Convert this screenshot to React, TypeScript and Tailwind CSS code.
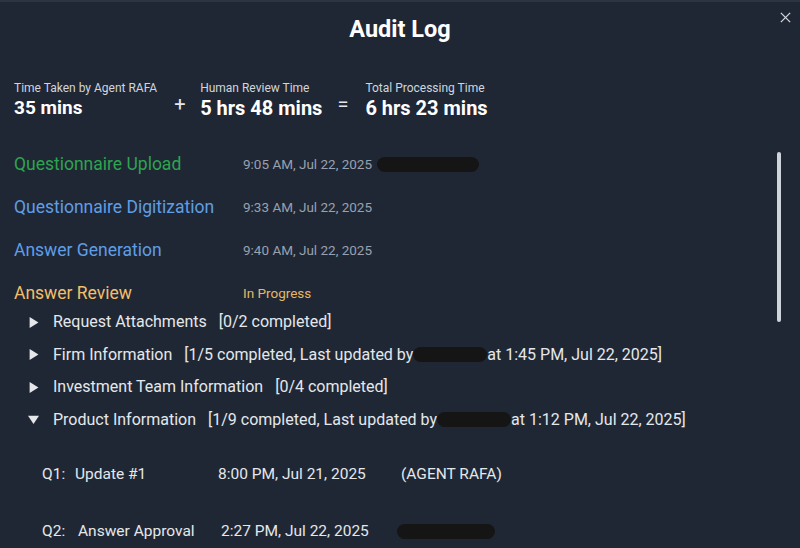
import React from 'react';

const Redacted: React.FC<{ w: string }> = ({ w }) => (
  <span className={`inline-block h-[15px] rounded-full bg-[#151515] align-middle ${w}`} />
);

const Caret: React.FC<{ open?: boolean }> = ({ open }) => (
  <svg className="w-[11px] h-[11px] text-gray-200" viewBox="0 0 10 10" fill="currentColor">
    {open ? <path d="M0 1.5h10L5 9z" /> : <path d="M1.5 0v10L9.5 5z" />}
  </svg>
);

const stages = [
  { name: 'Questionnaire Upload', color: 'text-[#2ea44f]', time: '9:05 AM, Jul 22, 2025', redacted: true },
  { name: 'Questionnaire Digitization', color: 'text-[#5f9ee6]', time: '9:33 AM, Jul 22, 2025' },
  { name: 'Answer Generation', color: 'text-[#5f9ee6]', time: '9:40 AM, Jul 22, 2025' },
];

const sections = [
  { name: 'Request Attachments', info: '[0/2 completed]' },
  { name: 'Firm Information', info: '[1/5 completed, Last updated by', by: 'at 1:45 PM, Jul 22, 2025]' },
  { name: 'Investment Team Information', info: '[0/4 completed]' },
  { name: 'Product Information', info: '[1/9 completed, Last updated by', by: 'at 1:12 PM, Jul 22, 2025]', open: true },
];

export default function App() {
  return (
    <div
      className="w-[800px] h-[548px] overflow-hidden bg-[#1f2735] border-t-2 border-[#2c3442] relative text-white"
      style={{ fontFamily: 'Roboto, "Noto Sans", sans-serif' }}
    >
      <button className="absolute right-[8px] top-[9px] text-gray-300">
        <svg className="w-[13px] h-[13px]" viewBox="0 0 14 14" stroke="currentColor" strokeWidth="1.4">
          <path d="M2 2l10 10M12 2L2 12" />
        </svg>
      </button>

      <h1 className="text-center text-[23.5px] font-bold pt-[12px] leading-[30px]">Audit Log</h1>

      <div className="flex items-end pl-[14px] mt-[36px]">
        <div className="flex flex-col">
          <span className="text-[12px] text-gray-300 leading-[16px]">Time Taken by Agent RAFA</span>
          <span className="text-[19px] font-bold leading-[24px]">35 mins</span>
        </div>
        <span className="ml-[17px] w-[12px] text-[20px] text-gray-200 leading-[24px] mb-[4px]">+</span>
        <div className="flex flex-col ml-[14px]">
          <span className="text-[12px] text-gray-300 leading-[16px]">Human Review Time</span>
          <span className="text-[20px] font-bold leading-[24px]">5 hrs 48 mins</span>
        </div>
        <span className="ml-[15px] w-[12px] text-[20px] text-gray-200 leading-[24px] mb-[4px]">=</span>
        <div className="flex flex-col ml-[16px]">
          <span className="text-[12px] text-gray-300 leading-[16px]">Total Processing Time</span>
          <span className="text-[20px] font-bold leading-[24px]">6 hrs 23 mins</span>
        </div>
      </div>

      <div className="relative mt-[22px]">
        <div className="absolute right-[19px] top-[10px] w-[4px] h-[170px] rounded-full bg-[#cfd3da]" />

        <div className="flex flex-col pl-[14px]">
          {stages.map((s) => (
            <div key={s.name} className="flex items-center h-[43.3px]">
              <span className={`w-[229px] text-[17.5px] ${s.color}`}>{s.name}</span>
              <span className="text-[13.5px] text-gray-400">{s.time}</span>
              {s.redacted && <span className="ml-[5px]"><Redacted w="w-[102px]" /></span>}
            </div>
          ))}
          <div className="flex items-center h-[43.3px]">
            <span className="w-[229px] text-[17.5px] text-[#f2bf68]">Answer Review</span>
            <span className="text-[13.5px] text-[#e5b766]">In Progress</span>
          </div>
        </div>

        <div className="flex flex-col pl-[28px] -mt-[9px]">
          {sections.map((s) => (
            <div key={s.name} className="flex items-center h-[32.4px] text-[16px] text-gray-200">
              <Caret open={s.open} />
              <span className="ml-[14px]">{s.name}</span>
              <span className="ml-[12px]">{s.info}</span>
              {s.by && (
                <>
                  <Redacted w="w-[74px]" />
                  <span>{s.by}</span>
                </>
              )}
            </div>
          ))}
        </div>

        <div className="flex flex-col pl-[42px] mt-[27px] text-[15.5px] text-gray-200">
          <div className="flex items-center h-[24px]">
            <span className="w-[33px]">Q1:</span>
            <span className="w-[143px]">Update #1</span>
            <span className="w-[183px]">8:00 PM, Jul 21, 2025</span>
            <span>(AGENT RAFA)</span>
          </div>
          <div className="flex items-center h-[24px] mt-[33px]">
            <span className="w-[36px]">Q2:</span>
            <span className="w-[143px]">Answer Approval</span>
            <span className="w-[176px]">2:27 PM, Jul 22, 2025</span>
            <Redacted w="w-[98px]" />
          </div>
        </div>
      </div>
    </div>
  );
}
